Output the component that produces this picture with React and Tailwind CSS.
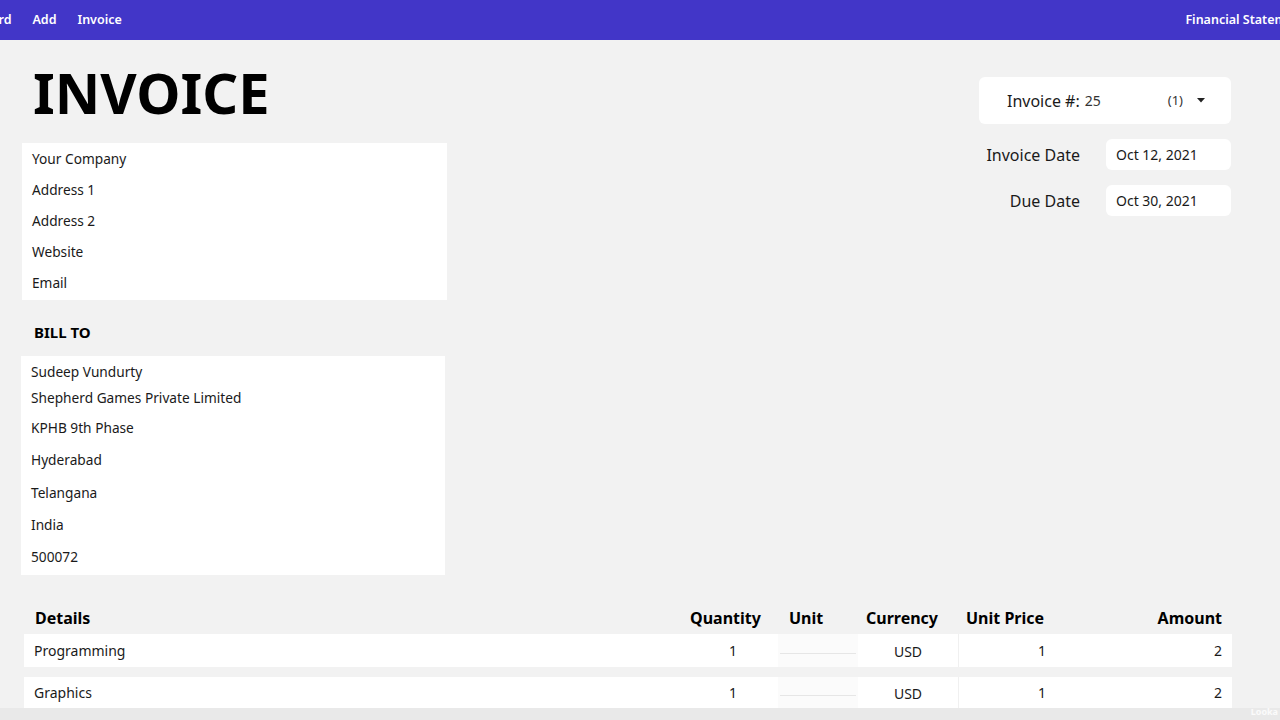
import React from "react";

const font = { fontFamily: '"Noto Sans", "Open Sans", sans-serif' };

function Row({ children, className = "" }) {
  return <div className={`flex items-center px-[10px] text-[13.7px] text-[#1a1a1a] ${className}`}>{children}</div>;
}

export default function App() {
  const company = ["Your Company", "Address 1", "Address 2", "Website", "Email"];
  const bill = [
    ["Sudeep Vundurty", "h-[28px] pt-[4px]"],
    ["Shepherd Games Private Limited", "h-[28px]"],
    ["KPHB 9th Phase", "h-[32px]"],
    ["Hyderabad", "h-[33px]"],
    ["Telangana", "h-[32px]"],
    ["India", "h-[32px]"],
    ["500072", "h-[32px]"],
  ];
  const items = ["Programming", "Graphics"];
  return (
    <div className="w-[1280px] h-[720px] overflow-hidden bg-[#f2f2f2] relative" style={font}>
      <nav className="h-10 bg-[#4236c8] flex items-center justify-between text-white text-[12.5px] font-semibold">
        <div className="flex items-center gap-[21px] -ml-[55px] pt-[1px]">
          <span>Dashboard</span>
          <span>Add</span>
          <span>Invoice</span>
        </div>
        <div className="-mr-[33px] whitespace-nowrap pt-[1px]">Financial Statements</div>
      </nav>

      <div className="flex justify-between pr-[49px]">
        <div className="pl-[21px] w-[447px]">
          <h1 className="text-[56px] font-bold leading-none text-black pl-[12px] mt-[24px] mb-[23px]">INVOICE</h1>
          <div className="bg-white w-[425px] ml-[1px] py-[1px]">
            {company.map((t) => (
              <Row key={t} className="h-[31px]">{t}</Row>
            ))}
          </div>
          <div className="pl-[13px] mt-[20px] h-[24px] flex items-center text-[15px] font-bold text-black">BILL TO</div>
          <div className="bg-white w-[424px] mt-[12px] pb-[2px]">
            {bill.map(([t, h]) => (
              <Row key={t} className={h}>{t}</Row>
            ))}
          </div>
        </div>

        <div className="w-[252px] mt-[37px]">
          <div className="h-[47px] bg-white rounded-md flex items-center pl-[28px] pr-[26px] text-[16px] text-[#1a1a1a]">
            <span>Invoice #:</span>
            <span className="ml-[5px] text-[14px] text-[#333]">25</span>
            <span className="ml-auto text-[13px] text-[#333]">(1)</span>
            <svg className="ml-[14px]" width="8" height="5" viewBox="0 0 8 5"><path d="M0 0h8L4 4.5z" fill="#222" /></svg>
          </div>
          <div className="flex items-center mt-[15px]">
            <div className="w-[101px] text-right text-[16px] text-[#1a1a1a]">Invoice Date</div>
            <div className="ml-[26px] flex-1 h-[31px] bg-white rounded-md flex items-center pl-[10px] text-[14px] text-[#1a1a1a]">Oct 12, 2021</div>
          </div>
          <div className="flex items-center mt-[15px]">
            <div className="w-[101px] text-right text-[16px] text-[#1a1a1a]">Due Date</div>
            <div className="ml-[26px] flex-1 h-[31px] bg-white rounded-md flex items-center pl-[10px] text-[14px] text-[#1a1a1a]">Oct 30, 2021</div>
          </div>
        </div>
      </div>

      <div className="ml-[24px] w-[1208px] mt-[29px]">
        <div className="flex h-[28px] items-center text-[16px] font-bold text-black">
          <div className="w-[656px] pl-[11px]">Details</div>
          <div className="w-[98px] pl-[10px]">Quantity</div>
          <div className="w-[80px] pl-[11px]">Unit</div>
          <div className="w-[100px] pl-[8px]">Currency</div>
          <div className="w-[100px] pl-[8px]">Unit Price</div>
          <div className="flex-1 text-right pr-[10px]">Amount</div>
        </div>
        {items.map((t, i) => (
          <div key={t} className={`flex bg-white text-[14px] text-[#1a1a1a] ${i === 1 ? "mt-[10px] h-[31px]" : "mt-[2px] h-[33px]"}`}>
            <div className="w-[656px] pl-[10px] flex items-center">{t}</div>
            <div className="w-[98px] flex items-center justify-center pl-[8px]">1</div>
            <div className="w-[80px] flex items-center px-[2px] bg-[#fbfbfb]">
              <div className="w-full h-[1px] bg-[#e6e6e6] mt-[6px]" />
            </div>
            <div className="w-[100px] flex items-center justify-center pt-[2px]">USD</div>
            <div className="w-[100px] flex items-center justify-end pr-[12px] border-l border-[#f0f0f0]">1</div>
            <div className="flex-1 flex items-center justify-end pr-[10px]">2</div>
          </div>
        ))}
      </div>
      <div className="absolute left-0 right-0 bottom-0 h-[12px] bg-[#e9e9e9]" />
      <div className="absolute right-[2px] bottom-[2px] text-[9px] text-white/80 font-bold">Looka</div>
    </div>
  );
}
